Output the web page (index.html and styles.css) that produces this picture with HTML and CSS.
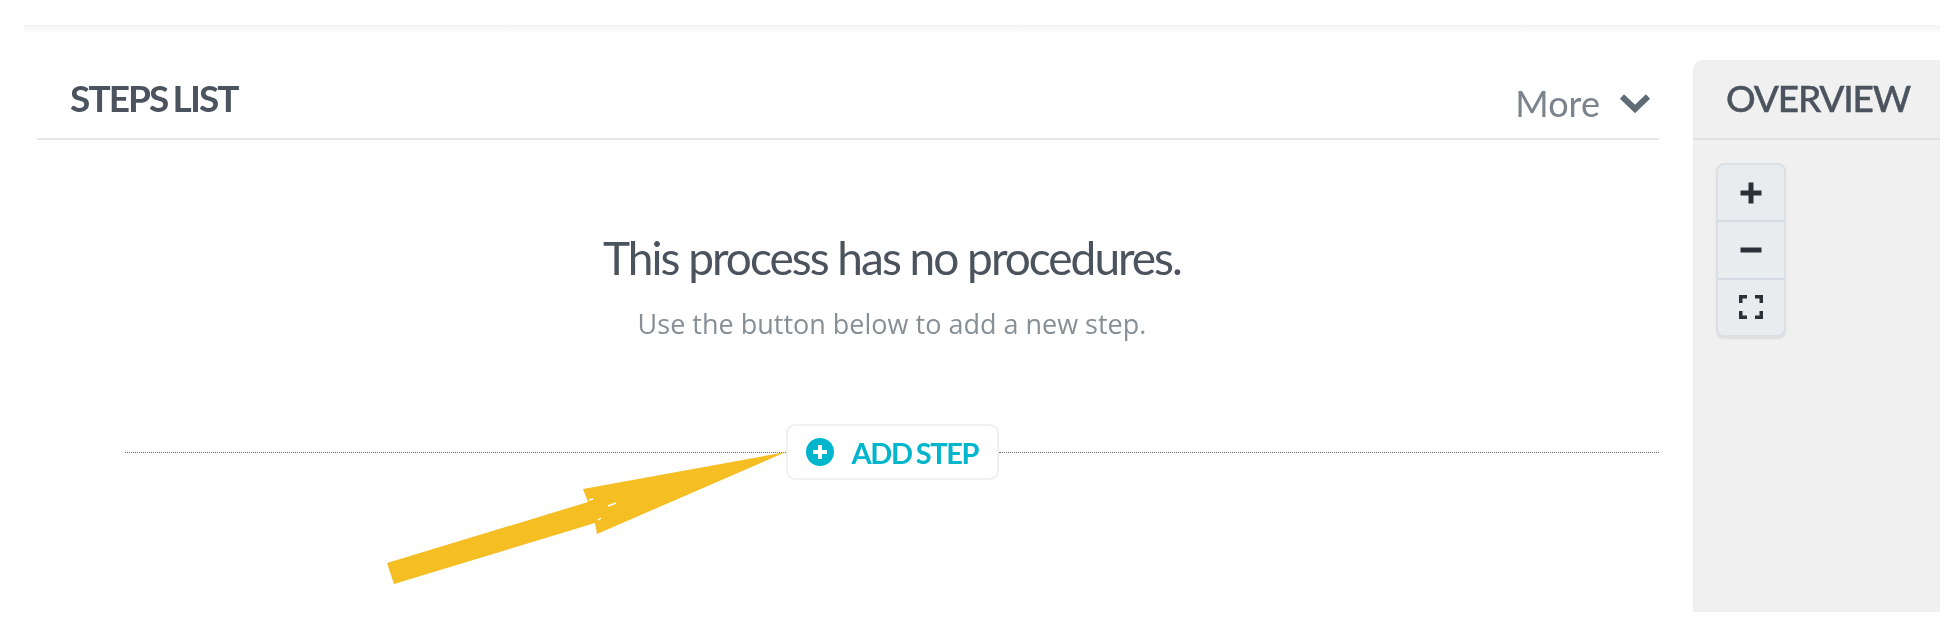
FILE: index.html
```html
<!DOCTYPE html>
<html lang="en">
	<head>
		<meta charset="UTF-8" />
		<meta name="viewport" content="width=device-width, initial-scale=1.0" />
		<title>Steps list</title>
		<link rel="stylesheet" href="styles.css">
	</head>
	<body>
		<div class="page">
			<div class="topbar"></div>
			<div class="columns">
				<main class="steps">
					<header class="steps-header">
						<h2 class="title">STEPS LIST</h2>
						<button type="button" class="more">
							<span class="more-label">More</span>
							<svg class="chevron" viewBox="0 0 32 20" aria-hidden="true">
								<path d="M3 3.5 L16 16 L29 3.5" />
							</svg>
						</button>
					</header>
					<div class="empty">
						<h1 class="empty-title">This process has no procedures.</h1>
						<p class="empty-text">Use the button below to add a new step.</p>
						<div class="add-row">
							<span class="dots"></span>
							<button type="button" class="add-step">
								<svg class="add-icon" viewBox="0 0 28 28" aria-hidden="true">
									<circle cx="14" cy="14" r="14" fill="#00b5cc" />
									<path d="M14 7 V21 M7 14 H21" stroke="#fff" stroke-width="4" />
								</svg>
								ADD STEP
							</button>
							<span class="dots"></span>
						</div>
					</div>
				</main>
				<aside class="overview">
					<h2 class="title overview-title">OVERVIEW</h2>
					<div class="zoom-box">
						<button type="button" class="zoom-btn">
							<svg viewBox="0 0 24 24" aria-hidden="true"><path d="M12 1.5 V22.5 M1.5 12 H22.5" /></svg>
						</button>
						<button type="button" class="zoom-btn">
							<svg viewBox="0 0 24 24" aria-hidden="true"><path d="M1.5 12 H22.5" /></svg>
						</button>
						<button type="button" class="zoom-btn">
							<svg class="fit" viewBox="0 0 24 24" aria-hidden="true"><path d="M1.5 8 V1.5 H8 M16 1.5 H22.5 V8 M22.5 16 V22.5 H16 M8 22.5 H1.5 V16" /></svg>
						</button>
					</div>
				</aside>
			</div>
		</div>
		<!-- annotation drawn on top of the screenshot -->
		<svg class="arrow" viewBox="0 0 420 150" aria-hidden="true">
			<polygon points="406,2 203,39 208,52 7,113 14,134 215,73 217,84" fill="#f5be23" />
			<path d="M209 50 l4 -1 M228 56 l8 -3 M218 70 l3 -2" stroke="#fff" stroke-width="1.5" />
		</svg>
	</body>
</html>
```

FILE: styles.css
```css
* {
	box-sizing: border-box;
}

body {
	margin: 0;
	background: #fff;
	font-family: "Lato", "Liberation Sans", sans-serif;
	color: #4b545e;
}

button {
	font-family: inherit;
	background: none;
	border: 0;
	padding: 0;
}

/* the source picture is a soft upscale */
.page,
.arrow {
	filter: blur(0.5px);
}

.page {
	height: 624px;
	padding: 25px 10px 12px 24px;
	display: flex;
	flex-direction: column;
	overflow: hidden;
}

.topbar {
	height: 9px;
	background: linear-gradient(#f3f3f3, #fff);
	flex: none;
	margin-bottom: 26px;
}

.columns {
	flex: 1;
	display: flex;
	gap: 34px;
	padding-left: 13px;
	min-height: 0;
}

.steps {
	flex: 1;
}

.steps-header {
	height: 80px;
	padding-left: 33px;
	border-bottom: 2px solid #e6e7e8;
	display: flex;
	justify-content: space-between;
	align-items: center;
}

.title {
	margin: 0 0 4px;
	font-size: 37px;
	font-weight: 700;
	letter-spacing: -1.9px;
	word-spacing: -2px;
}

.more {
	font-size: 36px;
	color: #7b848d;
	display: flex;
	align-items: center;
	gap: 19px;
	padding-right: 8px;
}

.more-label {
	padding-top: 8px;
}

.chevron {
	width: 32px;
	height: 20px;
	margin-top: 8px;
	fill: none;
	stroke: #5f6b75;
	stroke-width: 6;
}

.empty {
	margin-left: 88px;
	text-align: center;
}

.empty-title {
	margin: 90px 0 0;
	font-size: 46px;
	font-weight: 400;
	letter-spacing: -2px;
	line-height: 56px;
}

.empty-text {
	margin: 21px 0 0;
	font-family: "Open Sans", sans-serif;
	font-size: 27px;
	line-height: 34px;
	color: #868e96;
}

.add-row {
	margin-top: 83px;
	display: flex;
	align-items: center;
}

.dots {
	flex: 1;
	border-top: 1px dotted #666;
}

.add-step {
	width: 213px;
	height: 56px;
	background: #fff;
	border: 2px solid #f0f0f0;
	border-radius: 9px;
	display: flex;
	align-items: center;
	gap: 18px;
	padding-left: 18px;
	font-size: 29px;
	font-weight: 700;
	letter-spacing: -1.4px;
	word-spacing: -1.5px;
	color: #00b5cc;
}

.add-icon {
	width: 28px;
	height: 28px;
}

.overview {
	width: 247px;
	background: #f0f0f0;
	border-radius: 10px 0 0 0;
}

.overview-title {
	height: 80px;
	margin: 0;
	padding: 0 0 4px 33px;
	border-bottom: 2px solid #e0e0e0;
	display: flex;
	align-items: center;
	font-weight: 500;
	letter-spacing: -1.2px;
	-webkit-text-stroke: 0.4px #4b545e;
}

.zoom-box {
	margin: 23px 0 0 23px;
	width: 70px;
	height: 174px;
	background: #e9ecef;
	border: 2px solid #dbe0e6;
	border-radius: 8px;
	box-shadow: 0 2px 2px rgba(0, 0, 0, 0.08);
	display: flex;
	flex-direction: column;
}

.zoom-btn {
	flex: 1;
	display: flex;
	align-items: center;
	justify-content: center;
	border-bottom: 2px solid #d5dbe2;
}

.zoom-btn:last-child {
	border-bottom: 0;
}

.zoom-btn svg {
	width: 24px;
	height: 24px;
	fill: none;
	stroke: #2b3138;
	stroke-width: 5;
}

.zoom-btn .fit {
	stroke-width: 4;
}

.arrow {
	position: absolute;
	left: 380px;
	top: 450px;
	width: 420px;
	height: 150px;
}
```
